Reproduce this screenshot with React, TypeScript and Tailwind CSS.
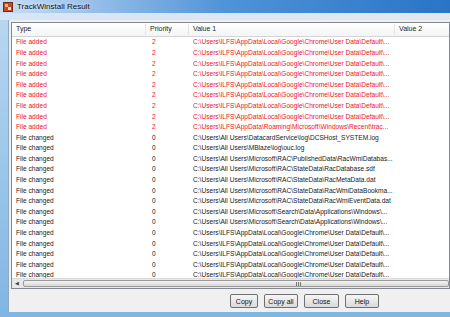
import React from "react";

const chrome = "C:\\Users\\ILFS\\AppData\\Local\\Google\\Chrome\\User Data\\Default\\...";
const rac = "C:\\Users\\All Users\\Microsoft\\RAC\\";
const search = "C:\\Users\\All Users\\Microsoft\\Search\\Data\\Applications\\Windows\\...";

type Row = { type: string; priority: string; value: string; added: boolean };

const rows: Row[] = [
    ...Array(8).fill(chrome).map((v) => ({ type: "File added", priority: "2", value: v, added: true })),
    { type: "File added", priority: "2", value: "C:\\Users\\ILFS\\AppData\\Roaming\\Microsoft\\Windows\\Recent\\trac...", added: true },
    ...[
        "C:\\Users\\All Users\\DatacardService\\log\\DCSHost_SYSTEM.log",
        "C:\\Users\\All Users\\MBlaze\\log\\ouc.log",
        rac + "PublishedData\\RacWmiDatabas...",
        rac + "StateData\\RacDatabase.sdf",
        rac + "StateData\\RacMetaData.dat",
        rac + "StateData\\RacWmiDataBookma...",
        rac + "StateData\\RacWmiEventData.dat",
        search,
        search,
        chrome,
        chrome,
        chrome,
        chrome,
        chrome,
    ].map((v) => ({ type: "File changed", priority: "0", value: v, added: false })),
];

function Btn({ label, w }: { label: string; w: string }) {
    return (
        <button className={`h-[14px] ${w} rounded-[2px] border border-[#707070] bg-gradient-to-b from-[#f6f6f6] to-[#dadada] text-[7px] leading-none text-[#111]`}>
            {label}
        </button>
    );
}

function TitleIcon() {
    return (
        <svg width="10" height="10" viewBox="0 0 10 10">
            <rect x="0.5" y="0.5" width="9" height="9" fill="#c9452b" stroke="#7a2a18" />
            <rect x="2" y="2" width="3" height="3" fill="#f2c14e" />
            <rect x="5" y="5" width="3" height="3" fill="#fbe7b5" />
        </svg>
    );
}

export default function App() {
    return (
        <div
            className="w-[450px] h-[317px] overflow-hidden flex flex-col bg-gradient-to-b from-[#bcd8f0] to-[#7fb6e2]"
            style={{ fontFamily: "'Liberation Sans', Arial, sans-serif" }}
        >
            {/* title bar */}
            <div className="h-[20px] flex flex-col">
                <div className="h-[13px] flex items-center gap-[4px] pl-[3px] bg-gradient-to-r from-[#c7def3] via-[#4f93d8] to-[#2a74c6]">
                    <TitleIcon />
                    <span className="text-[8px] text-[#111] [text-shadow:0_0_4px_#fff]">TrackWinstall Result</span>
                </div>
                <div className="flex-1 bg-gradient-to-r from-[#d4e6f6] to-[#e3e8ee]" />
            </div>

            <div className="flex-1 ml-[8px] mb-[5px] bg-[#f0f0f0] border-l border-[#8ea9c6] flex flex-col pl-[2px] pt-[2px]">
                {/* list */}
                <div className="h-[267px] border border-[#828790] bg-white flex flex-col overflow-hidden">
                    <div className="h-[14px] shrink-0 flex items-center border-b border-[#d5d5d5] bg-gradient-to-b from-white to-[#f3f4f6] text-[7px] text-[#1e1e1e]">
                        <div className="w-[134px] pl-[4px] border-r border-[#e5e5e5]">Type</div>
                        <div className="w-[43px] pl-[4px] border-r border-[#e5e5e5]">Priority</div>
                        <div className="w-[206px] pl-[4px] border-r border-[#e5e5e5]">Value 1</div>
                        <div className="pl-[4px]">Value 2</div>
                    </div>
                    <div className="flex-1 overflow-hidden">
                        {rows.map((r, i) => (
                            <div
                                key={i}
                                className={`h-[10.6px] flex items-center whitespace-nowrap text-[6.6px] ${r.added ? "text-[#f0141e]" : "text-[#1a1a1a]"}`}
                            >
                                <div className="w-[134px] pl-[4px]">{r.type}</div>
                                <div className="w-[43px] pl-[6px]">{r.priority}</div>
                                <div className="pl-[4px]">{r.value}</div>
                            </div>
                        ))}
                    </div>
                    {/* horizontal scrollbar */}
                    <div className="h-[10px] shrink-0 flex bg-[#e8e8e8] border-t border-[#dcdcdc]">
                        <div className="w-[10px] flex items-center justify-center text-[5px] text-[#444]">◀</div>
                        <div className="flex-1 ml-[1px] my-[1px] rounded-[2px] border border-[#9a9a9a] bg-gradient-to-b from-[#f4f4f4] to-[#d8d8d8] flex items-center">
                            <div className="ml-[272px] flex gap-[1px]">
                                <div className="w-[1px] h-[4px] bg-[#777]" />
                                <div className="w-[1px] h-[4px] bg-[#777]" />
                                <div className="w-[1px] h-[4px] bg-[#777]" />
                            </div>
                        </div>
                    </div>
                </div>

                {/* buttons */}
                <div className="flex gap-[6px] pl-[219px] pt-[5px]">
                    <Btn label="Copy" w="w-[28px]" />
                    <Btn label="Copy all" w="w-[34px]" />
                    <Btn label="Close" w="w-[35px]" />
                    <Btn label="Help" w="w-[34px]" />
                </div>
            </div>
        </div>
    );
}
